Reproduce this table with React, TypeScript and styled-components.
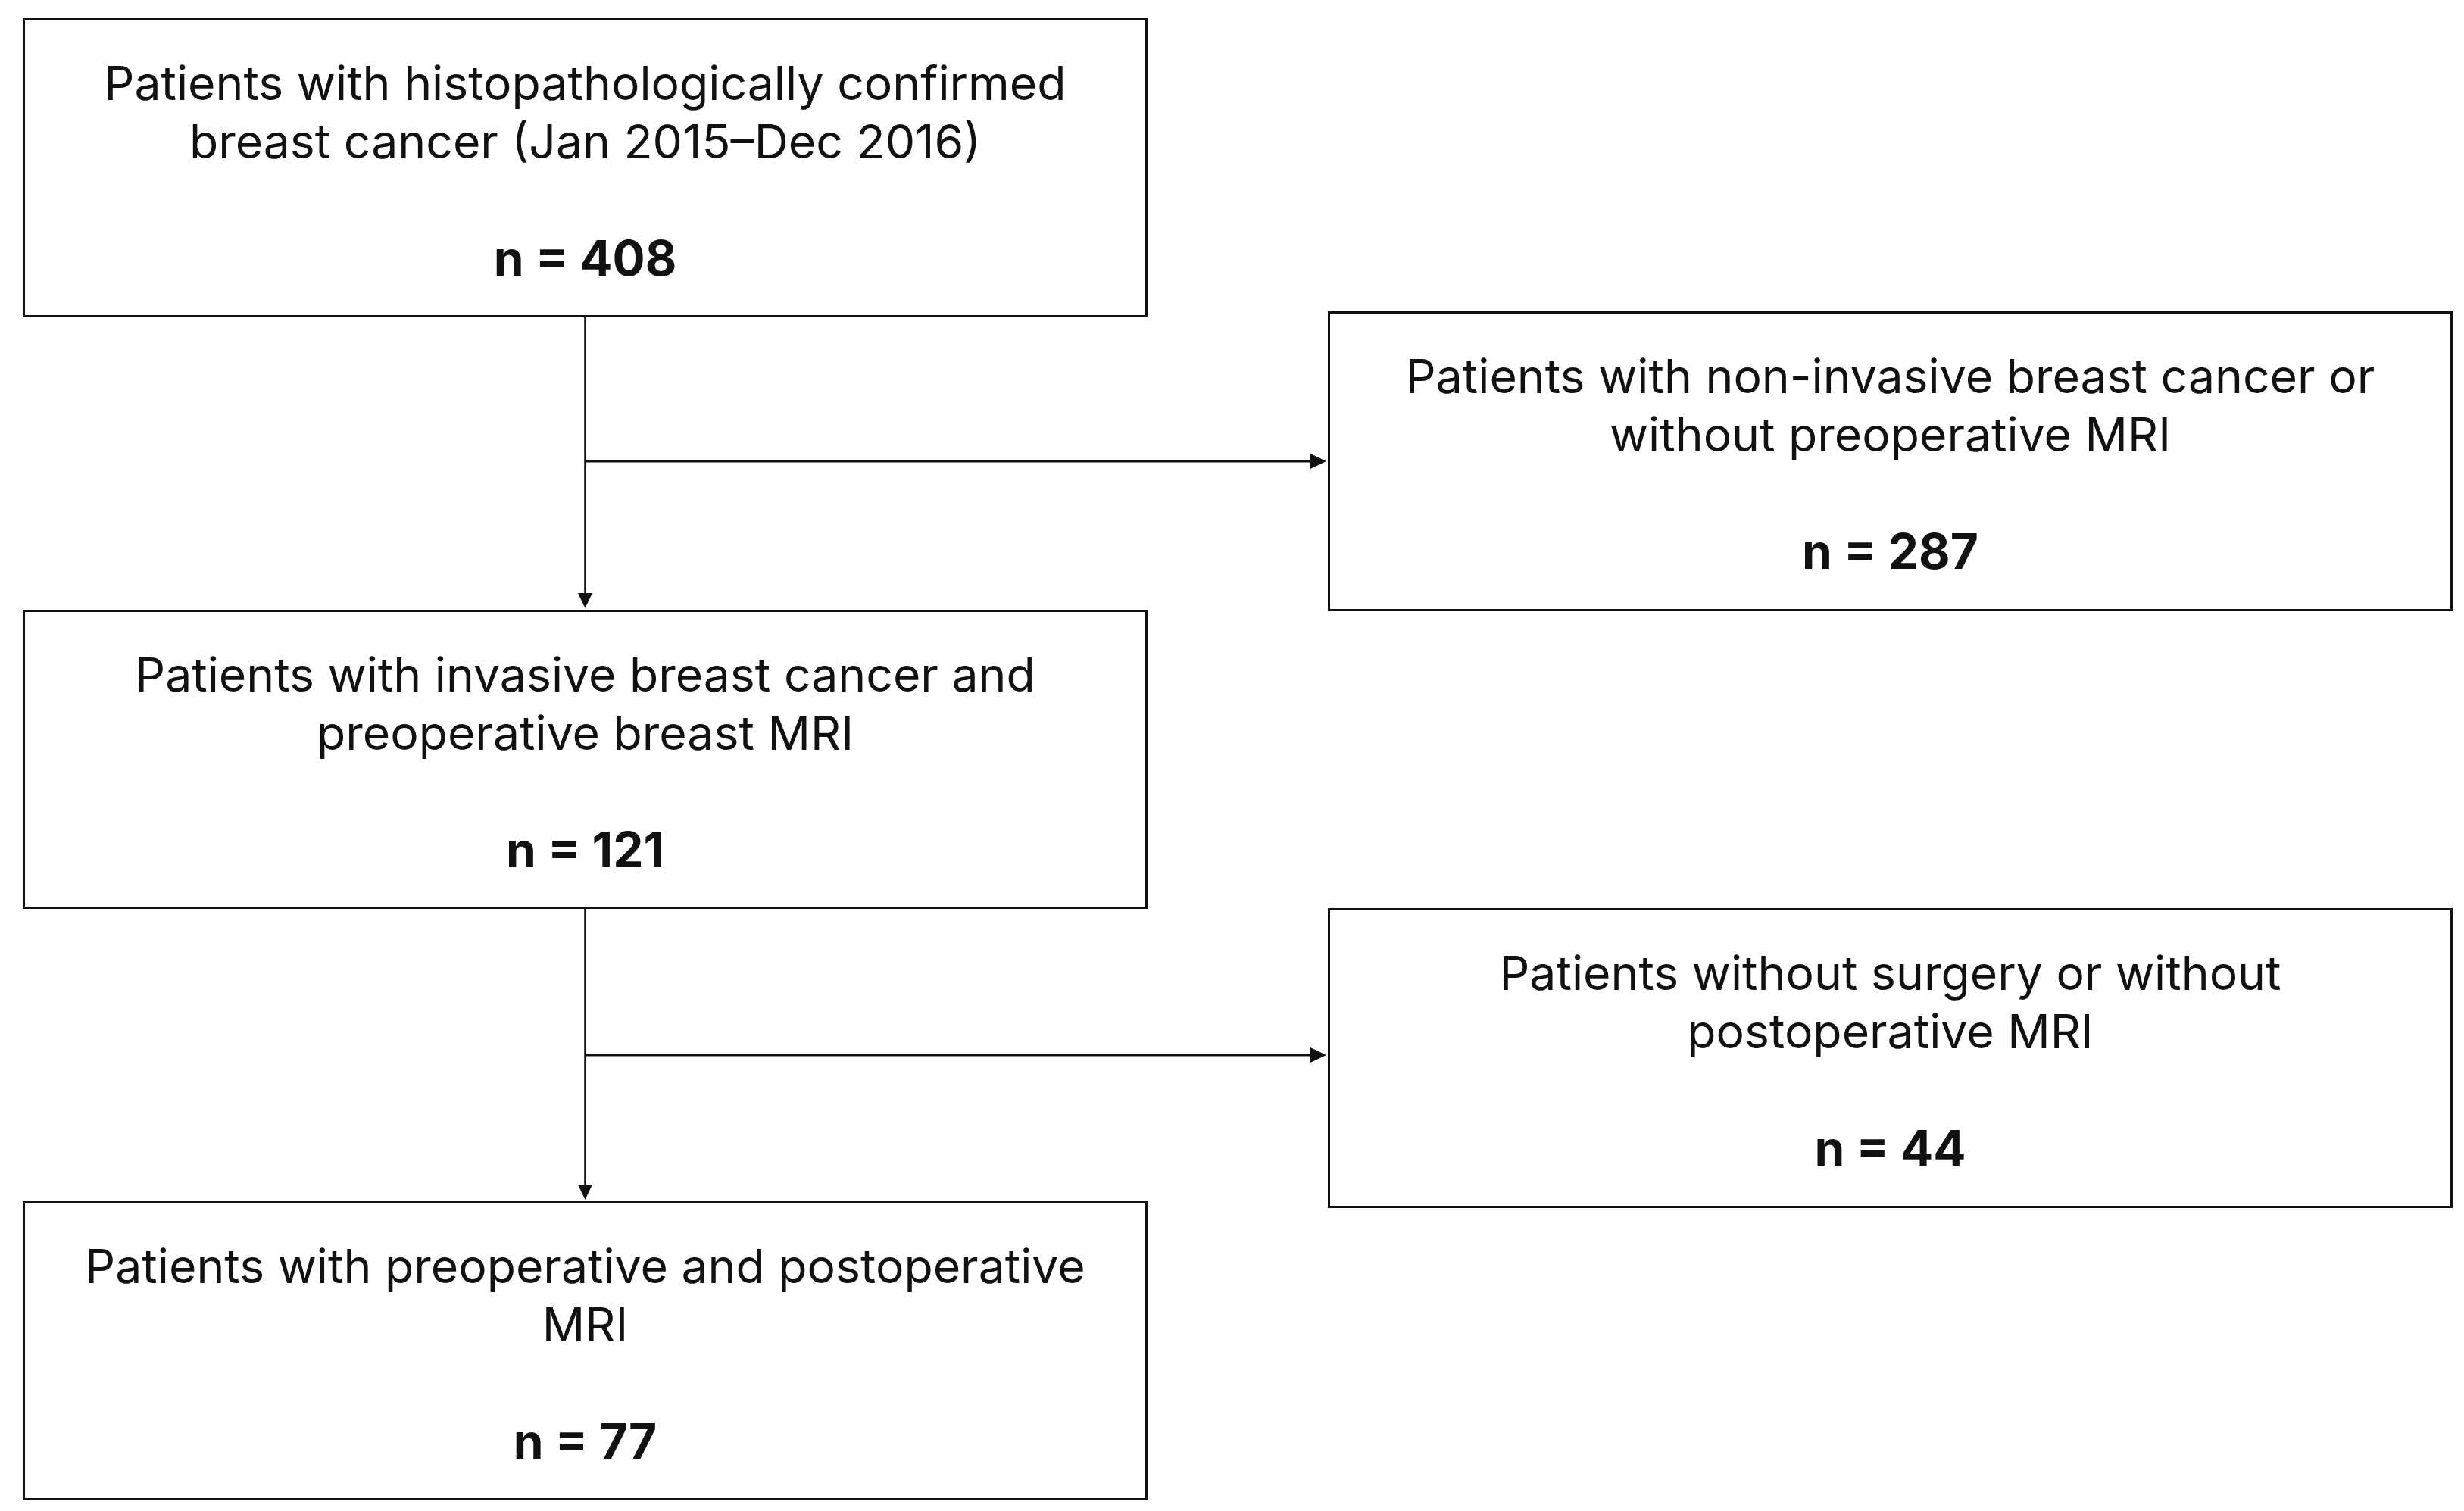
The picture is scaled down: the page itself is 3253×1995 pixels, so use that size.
import React from "react";
import styled, { createGlobalStyle } from "styled-components";

const GlobalStyle = createGlobalStyle`
  html, body {
    margin: 0;
    padding: 0;
    background: #ffffff;
  }
`;

const Page = styled.div`
  width: 3253px;
  height: 1995px;
  background: #ffffff;
  box-sizing: border-box;
  padding: 24px 0 0 30px;
`;

const Flow = styled.div`
  display: grid;
  grid-template-columns: 1485px 238px 1485px;
  grid-template-rows: 395px 386px 395px 386px 395px;
`;

const Box = styled.div<{ $side: "main" | "exclude"; $row: number; $shift: number }>`
  grid-column: ${(p) => (p.$side === "main" ? "1" : "3")};
  grid-row: ${(p) => p.$row};
  align-self: center;
  height: ${(p) => (p.$side === "main" ? "395px" : "396px")};
  margin-top: ${(p) => p.$shift}px;
  box-sizing: border-box;
  border: 3px solid #111111;
  display: flex;
  flex-direction: column;
  align-items: center;
  padding-top: 44px;
  font-family: Inter, "Liberation Sans", sans-serif;
  font-size: 62.5px;
  line-height: 77px;
  color: #111111;
  text-align: center;
`;

const Line = styled.span`
  display: block;
  white-space: nowrap;
`;

const Count = styled.span`
  display: block;
  margin-top: 77px;
  font-weight: 700;
  font-size: 64px;
  white-space: nowrap;
`;

const ConnectorCell = styled.div<{ $row: number }>`
  grid-column: 1 / 3;
  grid-row: ${(p) => p.$row};
  svg {
    display: block;
    width: 100%;
    height: 100%;
  }
`;

const Connector = ({ row, branchY }: { row: number; branchY: number }) => (
  <ConnectorCell $row={row}>
    <svg viewBox="0 0 1723 386">
      <line x1="742.5" y1="0" x2="742.5" y2="368" stroke="#111" strokeWidth="2.5" />
      <polygon points="733,364 752,364 742.5,384" fill="#111" />
      <line x1="742.5" y1={branchY} x2="1702" y2={branchY} stroke="#111" strokeWidth="3" />
      <polygon points={`1700,${branchY - 10} 1700,${branchY + 10} 1721,${branchY}`} fill="#111" />
    </svg>
  </ConnectorCell>
);

interface StepProps {
  side: "main" | "exclude";
  row: number;
  lines: string[];
  n: number;
  shift?: number;
}

const Step = ({ side, row, lines, n, shift = 0 }: StepProps) => (
  <Box $side={side} $row={row} $shift={shift}>
    {lines.map((l) => (
      <Line key={l}>{l}</Line>
    ))}
    <Count>n = {n}</Count>
  </Box>
);

export default function App() {
  return (
    <>
      <GlobalStyle />
      <Page>
        <Flow>
          <Step
            side="main"
            row={1}
            lines={["Patients with histopathologically confirmed", "breast cancer (Jan 2015–Dec 2016)"]}
            n={408}
          />
          <Connector row={2} branchY={190} />
          <Step
            side="exclude"
            row={2}
            lines={["Patients with non-invasive breast cancer or", "without preoperative MRI"]}
            n={287}
            shift={-6}
          />
          <Step
            side="main"
            row={3}
            lines={["Patients with invasive breast cancer and", "preoperative breast MRI"]}
            n={121}
          />
          <Connector row={4} branchY={193} />
          <Step
            side="exclude"
            row={4}
            lines={["Patients without surgery or without", "postoperative MRI"]}
            n={44}
            shift={8}
          />
          <Step
            side="main"
            row={5}
            lines={["Patients with preoperative and postoperative", "MRI"]}
            n={77}
          />
        </Flow>
      </Page>
    </>
  );
}
